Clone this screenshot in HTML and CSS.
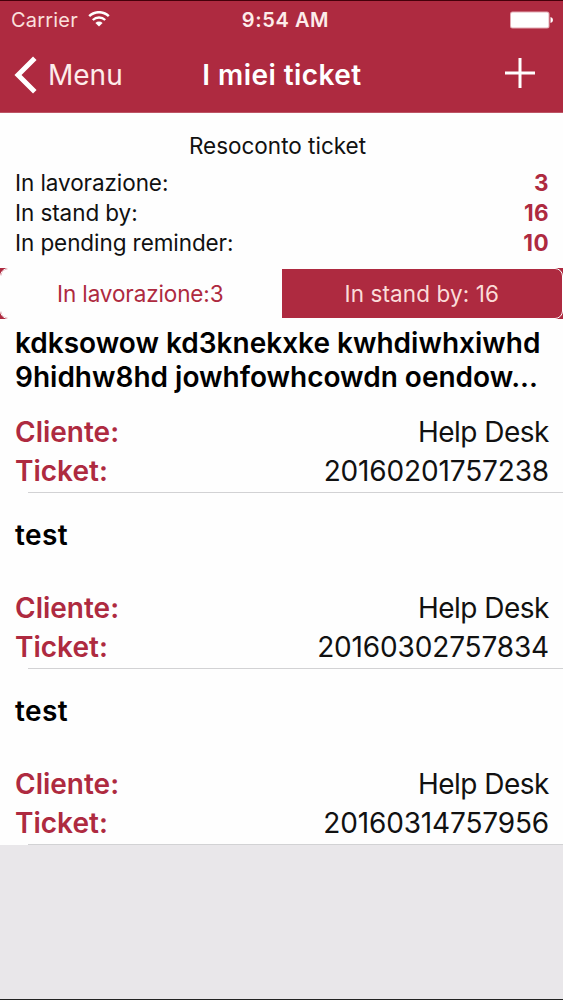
FILE: index.html
```
<!DOCTYPE html>
<html lang="it">
<head>
    <meta charset="UTF-8">
    <meta name="viewport" content="width=device-width, initial-scale=1.0">
    <title>I miei ticket</title>
    <link rel="stylesheet" href="styles.css">
</head>
<body>
    <div class="header">
        <div class="status-bar">
            <div class="carrier">
                <span class="carrier-name">Carrier</span>
                <svg class="wifi" width="22" height="17" viewBox="0 0 22 17">
                    <path d="M1.2 5.2 A14 14 0 0 1 20.8 5.2" fill="none" stroke="#fff" stroke-width="2.5"/>
                    <path d="M4.8 9 A9 9 0 0 1 17.2 9" fill="none" stroke="#fff" stroke-width="2.4"/>
                    <path d="M7.4 12 A5.2 5.2 0 0 1 14.6 12 L11 15.6 Z" fill="#fff"/>
                </svg>
            </div>
            <div class="clock">9:54 AM</div>
            <svg class="battery" width="43" height="18" viewBox="0 0 43 18">
                <rect x="0" y="0.5" width="39.5" height="17" rx="2.5" fill="#e3a9b2"/>
                <rect x="1" y="1.5" width="37.5" height="15" rx="1.5" fill="#fff"/>
                <path d="M40.5 6 Q43 6.5 43 9 Q43 11.5 40.5 12 Z" fill="#fff"/>
            </svg>
        </div>
        <div class="nav-bar">
            <div class="back-button">
                <svg width="24" height="38" viewBox="0 0 24 38">
                    <path d="M20.8 2.2 L4 19 L20.8 35.8" fill="none" stroke="#fff" stroke-width="5"/>
                </svg>
                <span class="back-label">Menu</span>
            </div>
            <h1>I miei ticket</h1>
            <svg class="add-button" width="30" height="30" viewBox="0 0 30 30">
                <path d="M15 0 V30 M0 15 H30" stroke="#fff" stroke-width="3"/>
            </svg>
        </div>
    </div>
    <div class="summary">
        <h2>Resoconto ticket</h2>
        <div class="summary-row"><span>In lavorazione:</span><b>3</b></div>
        <div class="summary-row"><span>In stand by:</span><b>16</b></div>
        <div class="summary-row"><span>In pending reminder:</span><b>10</b></div>
    </div>
    <div class="tabs">
        <div class="tab-group">
            <div class="tab active">In lavorazione:3</div>
            <div class="tab">In stand by: 16</div>
        </div>
    </div>
    <div class="ticket-list">
        <div class="ticket">
            <div class="ticket-title">kdksowow kd3knekxke kwhdiwhxiwhd<br>9hidhw8hd jowhfowhcowdn oendow...</div>
            <div class="ticket-row"><b>Cliente:</b><span class="client">Help Desk</span></div>
            <div class="ticket-row"><b>Ticket:</b><span class="code">20160201757238</span></div>
        </div>
        <div class="ticket">
            <div class="ticket-title short">test</div>
            <div class="ticket-row"><b>Cliente:</b><span class="client">Help Desk</span></div>
            <div class="ticket-row"><b>Ticket:</b><span class="code">20160302757834</span></div>
        </div>
        <div class="ticket">
            <div class="ticket-title short">test</div>
            <div class="ticket-row"><b>Cliente:</b><span class="client">Help Desk</span></div>
            <div class="ticket-row"><b>Ticket:</b><span class="code">20160314757956</span></div>
        </div>
    </div>
</body>
</html>
```
FILE: styles.css
```
* {
    box-sizing: border-box;
}
body {
    font-family: Inter, "Liberation Sans", sans-serif;
    margin: 0;
    height: 1000px;
    overflow: hidden;
    background-color: #e9e7ea;
    border-bottom: 1px solid #222;
    color: #111;
}
.header {
    height: 113px;
    background-color: #ae2a40;
    border-top: 1px solid #45000a;
    border-bottom: 1px solid #bd5565;
    color: #fff;
}
.status-bar {
    display: grid;
    grid-template-columns: 1fr auto 1fr;
    align-items: center;
    height: 37px;
    padding: 0 10px 0 11px;
    font-size: 20px;
}
.carrier {
    display: flex;
    align-items: center;
    gap: 10px;
    color: #fbe0dd;
    letter-spacing: 0.2px;
}
.clock {
    font-weight: 600;
    color: #fdecea;
    margin-left: 7px;
    letter-spacing: 0.6px;
}
.battery {
    justify-self: end;
}
.nav-bar {
    display: grid;
    grid-template-columns: 1fr auto 1fr;
    align-items: center;
    height: 74px;
    padding: 0 28px 0 14px;
}
.back-button {
    display: flex;
    align-items: center;
    gap: 10px;
    font-size: 28px;
    color: #fdecea;
}
.nav-bar h1 {
    margin: 0 0 0 15px;
    font-size: 28px;
    font-weight: 600;
    letter-spacing: 0.45px;
}
.add-button {
    justify-self: end;
    margin-bottom: 4px;
}
.summary {
    height: 155px;
    padding: 18px 14px 0 15px;
    background-color: #fefefe;
    font-size: 22.5px;
}
.summary h2 {
    margin: 0 9px 7px 0;
    font-size: 22.5px;
    font-weight: 400;
    line-height: 30px;
    text-align: center;
}
.summary-row {
    display: flex;
    justify-content: space-between;
    line-height: 30px;
    letter-spacing: -0.08px;
}
.summary-row b {
    font-weight: 700;
    color: #ae2a40;
    letter-spacing: 0.4px;
}
.tabs {
    height: 51px;
    background-color: #ae2a40;
}
.tab-group {
    display: grid;
    grid-template-columns: 1fr 1fr;
    height: 51px;
    border: 1px solid #fefefe;
    border-radius: 8px;
    overflow: hidden;
}
.tab {
    display: flex;
    align-items: center;
    justify-content: center;
    color: #fbdcd9;
    font-size: 22.5px;
    letter-spacing: 0.1px;
}
.tab.active {
    background-color: #fefefe;
    color: #ae2a40;
    letter-spacing: -0.12px;
    padding-right: 2px;
}
.ticket-list {
    background-color: #fefefe;
    height: 526px;
}
.ticket {
    height: 176px;
    padding: 10px 14px 0 15px;
    font-size: 28px;
    background: linear-gradient(#d2d2d4, #d2d2d4) 28px 100% / 100% 1px no-repeat;
}
.ticket:first-child {
    height: 174px;
    padding-top: 8px;
}
.ticket-title {
    height: 86px;
    font-weight: 600;
    line-height: 33.5px;
    white-space: nowrap;
    color: #000;
}
.ticket-title.short {
    padding-top: 16px;
    letter-spacing: 0.4px;
}
.ticket-row {
    display: flex;
    justify-content: space-between;
    line-height: 38.5px;
}
.ticket-row b {
    font-weight: 600;
    color: #ae2a40;
}
.client {
    letter-spacing: -0.5px;
}
.code {
    letter-spacing: -0.15px;
}
```
